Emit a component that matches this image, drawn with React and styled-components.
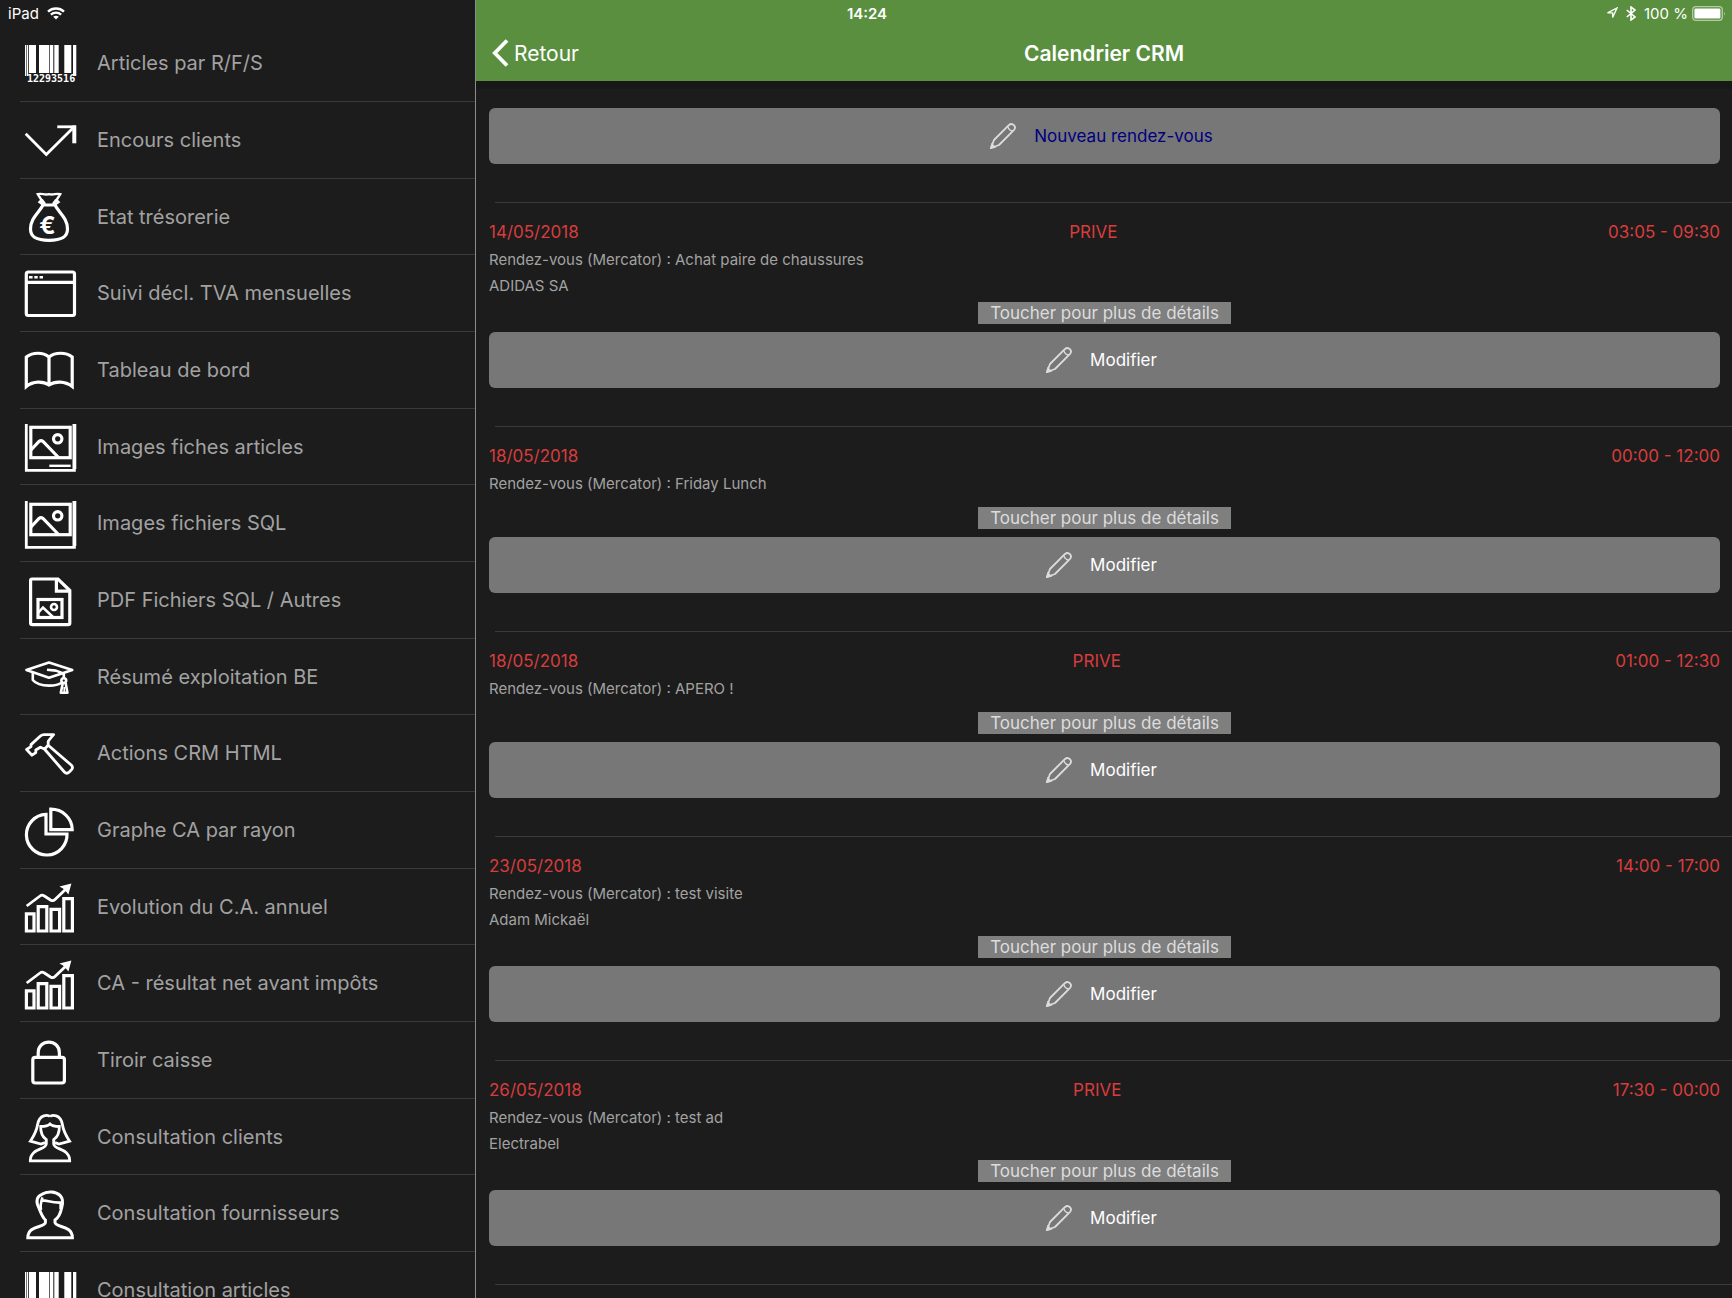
import styled, { createGlobalStyle } from 'styled-components';

const GlobalStyle = createGlobalStyle`
  * {
    box-sizing: border-box;
  }
  body {
    margin: 0;
    background-color: #1c1c1c;
    color: #a2a2a2;
    font-family: Inter, 'Liberation Sans', sans-serif;
  }
  button {
    font-family: inherit;
    border: none;
    cursor: pointer;
  }
`;

const Screen = styled.div`
  display: flex;
  height: 100vh;
  overflow: hidden;
`;

/* status bar, floats over both panes */
const StatusBar = styled.div`
  position: absolute;
  top: 0;
  left: 0;
  right: 0;
  display: grid;
  grid-template-columns: 1fr auto 1fr;
  align-items: center;
  height: 26px;
  padding: 0 6px 0 8px;
  color: white;
  font-size: 15px;
`;
const StatusGroup = styled.div`
  display: flex;
  align-items: center;
  justify-content: ${(props) => (props.$end ? 'flex-end' : 'flex-start')};
  gap: 8px;
`;
const Clock = styled.div`
  font-weight: 600;
`;
const Charge = styled.div`
  display: flex;
  align-items: center;
  gap: 4px;
`;

const Sidebar = styled.nav`
  flex: 0 0 476px;
  padding: 25px 0 0 20px;
  border-right: 1px solid #8c8c8c;
  overflow: hidden;
`;
const Menu = styled.ul`
  list-style: none;
  margin: 0;
  padding: 0;
`;
const MenuItem = styled.li`
  height: 77px;
  border-bottom: 1px solid #3a3a3a;
  &:nth-child(3n) {
    height: 76px;
  }
`;
const MenuLink = styled.a`
  display: flex;
  align-items: center;
  gap: 21px;
  height: 100%;
  padding-left: 5px;
  color: inherit;
  font-size: 20px;
  text-decoration: none;
`;
const MenuIcon = styled.svg`
  flex: none;
  width: 51px;
  height: 51px;
  overflow: visible;
  fill: none;
  stroke: white;
  stroke-width: 3.2;
`;

const Content = styled.main`
  flex: 1;
  min-width: 0;
  overflow: hidden;
`;
const Header = styled.header`
  display: grid;
  grid-template-columns: 1fr auto 1fr;
  align-items: center;
  height: 81px;
  padding: 25px 16px 0;
  background-color: #598f3f;
  color: white;
`;
const Back = styled.button`
  display: flex;
  align-items: center;
  justify-self: start;
  gap: 5px;
  padding: 0;
  background: none;
  color: white;
  font-size: 21px;
`;
const Title = styled.h1`
  margin: 0;
  font-size: 21px;
  font-weight: 600;
`;
const Toolbar = styled.div`
  padding: 19px 12px 38px 13px;
  border-top: 8px solid #181818;
`;
const ActionButton = styled.button`
  display: flex;
  align-items: center;
  justify-content: center;
  gap: 18px;
  width: 100%;
  height: 56px;
  padding: 0 6px 0 0;
  border-radius: 6px;
  background-color: #777777;
  color: ${(props) => (props.$primary ? '#00007f' : 'white')};
  font-size: 17px;
`;

const Entry = styled.article`
  padding: 0 12px 38px 13px;
  &::before {
    content: '';
    display: block;
    height: 1px;
    margin: 0 -12px 16px 6px;
    background-color: #3a3a3a;
  }
`;
const EntryHead = styled.div`
  display: flex;
  justify-content: space-between;
  height: 26px;
  margin-bottom: 2px;
  color: #d83c3c;
  font-size: 17px;
  line-height: 26px;
`;
const Notes = styled.div`
  min-height: 33px;
  margin-bottom: 3px;
  font-size: 15px;
  line-height: 26px;
`;
const Details = styled.button`
  display: block;
  height: 22px;
  margin: 0 auto 8px;
  padding: 0 12px;
  background-color: #7f7f7f;
  color: #dcdcdc;
  font-size: 17px;
  line-height: 22px;
`;

function Barcode() {
  return (
    <MenuIcon viewBox="0 0 51 51">
      <g fill="white" stroke="none">
        <path d="M0 7h1v31h-1zM1.6 7h1.6v31h-1.6zM4 7h7v28h-7zM14 7h10v28h-10zM24.7 7h3.6v28h-3.6zM29.3 7h4.4v28h-4.4zM39.3 7h7v28h-7zM48 7h3.3v31h-3.3z" />
        <text
          x="2"
          y="44"
          fontSize="10"
          fontWeight="700"
          fontFamily="'DejaVu Sans Mono', monospace"
        >
          12293516
        </text>
      </g>
    </MenuIcon>
  );
}

function Arrow() {
  return (
    <MenuIcon viewBox="0 0 51 51">
      <path d="M.7 18.8L21.3 39.5L49 12" strokeWidth="2.8" />
      <path d="M32.3 11.8H51" strokeWidth="2.8" />
      <path d="M49.3 10.5V28.3" strokeWidth="4" />
    </MenuIcon>
  );
}

function MoneyBag() {
  return (
    <MenuIcon viewBox="0 0 51 51">
      <path d="M18 14C14 22 5.5 27 5.5 38C5.5 46 11 49.3 24 49.3S42.5 46 42.5 38C42.5 27 34 22 30 14Z" />
      <path
        d="M18 13.5L14.5 11L16.5 9L12.8 3.2C17 1.8 19 4.5 24 3.2C29 4.5 31 1.8 35.2 3.2L31.5 9L33.5 11L30 13.5M17 9L20 13M31 9L28 13"
        strokeWidth="2.4"
      />
      <text
        x="22.5"
        y="43"
        fill="white"
        stroke="none"
        fontSize="24"
        fontWeight="700"
        textAnchor="middle"
      >
        €
      </text>
    </MenuIcon>
  );
}

function Browser() {
  return (
    <MenuIcon viewBox="0 0 51 51">
      <rect x="1.3" y="4" width="48.2" height="43.5" rx="2" />
      <path d="M1 14.3H49" />
      <path d="M4 9.2h3.6M9.3 9.2h3.4M14.6 9.2h3.4" strokeWidth="2.6" />
    </MenuIcon>
  );
}

function Book() {
  return (
    <MenuIcon viewBox="0 0 51 51">
      <path d="M1.3 41.5V12C8 7 18 7 24 12C30 7 41 7 47.2 12V41.5C40 36 30 36 24 40C18 36 8 36 1.3 41.5ZM24 12V41" />
    </MenuIcon>
  );
}

function Picture({ caption }) {
  return (
    <MenuIcon viewBox="0 0 51 51">
      <path d="M1.3 3V49.3H49.4V3" strokeWidth="2.8" />
      <path d="M49.4 3V48" strokeWidth="3.8" />
      <rect x="5.8" y="6.3" width="39.4" height="30.4" />
      <path d="M6 29L14 20.5Q16 18.8 18 20.5L34 37" />
      <circle cx="32.7" cy="17.8" r="4.2" />
      {caption && <path d="M24.3 44.8H45.7" strokeWidth="2.4" />}
    </MenuIcon>
  );
}

function PictureFile() {
  return (
    <MenuIcon viewBox="0 0 51 51">
      <path d="M7 4H33L44.8 15.5V48Q44.8 49.6 43 49.6H7.5Q5.6 49.6 5.6 48V5.5Q5.6 4 7 4Z" />
      <path d="M31.4 4V16.2H45" />
      <rect x="13" y="24.5" width="24" height="18" />
      <path d="M13 38L18 32.5L29 43" strokeWidth="2.6" />
      <circle cx="29" cy="32" r="3" strokeWidth="2.6" />
    </MenuIcon>
  );
}

function GradCap() {
  return (
    <MenuIcon viewBox="0 0 51 51">
      <g strokeWidth="2.6" strokeLinejoin="round">
        <path d="M1.4 19L24 11.6L47.2 19L24 26.8Z" />
        <path d="M7.8 21.5V29C11 33 17 34.6 24 34.6C30 34.6 34 33.6 37 31.5" />
        <path d="M22 18.8L31 19.6L38.8 22.8V28" />
        <circle cx="38.8" cy="29.6" r="2.4" />
        <path d="M37.8 32L35.8 41.8H42.4L40.6 32" />
        <path d="M39.2 36V41" strokeWidth="1.6" />
      </g>
    </MenuIcon>
  );
}

function Hammer() {
  return (
    <MenuIcon viewBox="0 0 51 51">
      <path
        d="M28.6 6.6H19Q17 6.6 15.4 8L6 16.6V18.6L1.6 21.5L7 27.2L10.8 24.6V22L15.4 19.2L19.4 21L39.4 44Q41.7 46.4 44.3 44L46.8 41.4Q48.4 39.2 46.2 37L23.2 17.2V13.4Q24.4 11.4 28.6 6.6ZM19.6 21L23.4 17"
        strokeWidth="2.8"
        strokeLinejoin="round"
      />
    </MenuIcon>
  );
}

function Pie() {
  return (
    <MenuIcon viewBox="0 0 51 51">
      <path d="M21 9.4A20.3 20.3 0 1 0 42 29H21Z" />
      <path d="M25.8 4.2V24.6H47.2C47.2 13 37.5 4.2 25.8 4.2Z" />
    </MenuIcon>
  );
}

function Growth() {
  return (
    <MenuIcon viewBox="0 0 51 51">
      <path d="M1.4 32.8H9V50H1.4ZM13.2 25.6H21.8V50H13.2ZM26 28.4H34.6V50H26ZM38.8 17.6H47.4V50H38.8Z" />
      <path
        d="M1.7 25L15 15Q17 13.4 19 14.8L25.5 19Q28 20.5 30 18.5L42 7"
        strokeWidth="2.8"
      />
      <path d="M46.4 2.4L34.4 5.4L38 7.6L41.4 11L43.4 13.4Z" fill="white" stroke="none" />
    </MenuIcon>
  );
}

function Lock() {
  return (
    <MenuIcon viewBox="0 0 51 51">
      <rect x="7.8" y="22.4" width="31.6" height="25.6" rx="2.4" />
      <path d="M13.2 22V18C13.2 3.4 34.4 3.4 34.4 18V22" />
    </MenuIcon>
  );
}

function Woman() {
  return (
    <MenuIcon viewBox="0 0 51 51">
      <path
        d="M25 5.6C23 3.6 14.5 3.2 12.6 13.5C11.6 20 9.5 24 5.4 30.2L16 33L20 31.6M25 5.6C27 3.6 35.5 3.2 37.4 13.5C38.4 20 40.5 24 44.6 30.2L34 33L30 31.6"
        strokeWidth="2.8"
      />
      <path
        d="M25 13C22.5 15.5 20 15.5 15.7 15.5C15.5 22 17.5 26 21.3 28.6V33C21 39 5.3 37 5.3 49.8H44.7C44.7 37 29 39 28.7 33V28.6C32.5 26 34.5 22 34.3 15.5C30 15.5 27.5 15.5 25 13Z"
        strokeWidth="2.8"
      />
    </MenuIcon>
  );
}

function Man() {
  return (
    <MenuIcon viewBox="0 0 51 51">
      <path
        d="M20.4 32C17 29 15.6 24 13.5 19C10.6 13 12 8 17 6.3C22 2.8 31 3.2 35 7.4C38.5 11 38 15.5 36.6 20C35.6 25 33.6 29.5 30 32V34.5C31 40 47.4 37 47.4 49.8H2.8C2.8 37 19.6 40 20.4 34.5Z"
        strokeWidth="3"
      />
      <path
        d="M16 22C15 18 16 14 17.4 9.4M16.6 12.4C22 12 26 15 35.6 14.6V21"
        strokeWidth="2.6"
      />
    </MenuIcon>
  );
}

function Pencil() {
  return (
    <svg width="26" height="26" viewBox="0 0 26 26" fill="none" stroke="#dcdcdc" strokeWidth="1.8">
      <path d="M1 25L4 17L18.8 2.2C22.5 -1 27 3.8 23.8 7.2L9 22Z" strokeLinejoin="round" />
      <path d="M17.8 3.3C18.5 6.2 20 7.6 22.8 8.2" strokeWidth="1.4" />
      <path d="M1 25L2 21.5L4.5 24Z" fill="#dcdcdc" />
    </svg>
  );
}

function Wifi() {
  return (
    <svg width="18" height="13" viewBox="0 0 18 13" fill="none" stroke="white" strokeWidth="2.4">
      <path d="M1 4.6C5.5 .4 12.5 .4 17 4.6M3.9 7.6C6.8 5 11.2 5 14.1 7.6" />
      <path d="M9 12.6L6.2 9.8C7.8 8.4 10.2 8.4 11.8 9.8Z" fill="white" stroke="none" />
    </svg>
  );
}

function Location() {
  return (
    <svg width="12" height="12" viewBox="0 0 12 12" fill="none" stroke="white" strokeWidth="1.3">
      <path d="M1.5 5.8L11 1L6.6 10.5V5.8Z" />
    </svg>
  );
}

function Bluetooth() {
  return (
    <svg width="10" height="15" viewBox="0 0 10 15" fill="none" stroke="white" strokeWidth="1.6">
      <path d="M.8 4L9 11L5 14V1L9 4L.8 11" />
    </svg>
  );
}

function Battery() {
  return (
    <svg width="34" height="15" viewBox="0 0 34 15" fill="none">
      <rect x=".7" y=".7" width="29.6" height="13.6" rx="3" stroke="#b4cda8" strokeWidth="1.3" />
      <rect x="2.4" y="2.4" width="26" height="10.2" rx="1.4" fill="white" />
      <path d="M32 5.2Q33.6 7.5 32 9.8Z" fill="#b4cda8" />
    </svg>
  );
}

const menu = [
  { label: 'Articles par R/F/S', icon: <Barcode /> },
  { label: 'Encours clients', icon: <Arrow /> },
  { label: 'Etat trésorerie', icon: <MoneyBag /> },
  { label: 'Suivi décl. TVA mensuelles', icon: <Browser /> },
  { label: 'Tableau de bord', icon: <Book /> },
  { label: 'Images fiches articles', icon: <Picture caption /> },
  { label: 'Images fichiers SQL', icon: <Picture /> },
  { label: 'PDF Fichiers SQL / Autres', icon: <PictureFile /> },
  { label: 'Résumé exploitation BE', icon: <GradCap /> },
  { label: 'Actions CRM HTML', icon: <Hammer /> },
  { label: 'Graphe CA par rayon', icon: <Pie /> },
  { label: 'Evolution du C.A. annuel', icon: <Growth /> },
  { label: 'CA - résultat net avant impôts', icon: <Growth /> },
  { label: 'Tiroir caisse', icon: <Lock /> },
  { label: 'Consultation clients', icon: <Woman /> },
  { label: 'Consultation fournisseurs', icon: <Man /> },
  { label: 'Consultation articles', icon: <Barcode /> },
];

const entries = [
  {
    date: '14/05/2018',
    flag: 'PRIVE',
    time: '03:05 - 09:30',
    notes: ['Rendez-vous (Mercator) : Achat paire de chaussures', 'ADIDAS SA'],
  },
  {
    date: '18/05/2018',
    time: '00:00 - 12:00',
    notes: ['Rendez-vous (Mercator) : Friday Lunch'],
  },
  {
    date: '18/05/2018',
    flag: 'PRIVE',
    time: '01:00 - 12:30',
    notes: ['Rendez-vous (Mercator) : APERO !'],
  },
  {
    date: '23/05/2018',
    time: '14:00 - 17:00',
    notes: ['Rendez-vous (Mercator) : test visite', 'Adam Mickaël'],
  },
  {
    date: '26/05/2018',
    flag: 'PRIVE',
    time: '17:30 - 00:00',
    notes: ['Rendez-vous (Mercator) : test ad', 'Electrabel'],
  },
];

function Appointment(props) {
  const { date, flag, time, notes } = props;
  return (
    <Entry>
      <EntryHead>
        <span>{date}</span>
        <span>{flag}</span>
        <span>{time}</span>
      </EntryHead>
      <Notes>
        {notes.map((note) => (
          <div key={note}>{note}</div>
        ))}
      </Notes>
      <Details type="button">Toucher pour plus de détails</Details>
      <ActionButton type="button">
        <Pencil />
        Modifier
      </ActionButton>
    </Entry>
  );
}

export default function App() {
  return (
    <Screen>
      <GlobalStyle />
      <Sidebar>
        <Menu>
          {menu.map((item) => (
            <MenuItem key={item.label}>
              <MenuLink href="#">
                {item.icon}
                {item.label}
              </MenuLink>
            </MenuItem>
          ))}
        </Menu>
      </Sidebar>
      <Content>
        <Header>
          <Back type="button">
            <svg width="17" height="28" viewBox="0 0 17 28" fill="none" stroke="white" strokeWidth="3.8">
              <path d="M15 1.5L2.8 14L15 26.5" />
            </svg>
            Retour
          </Back>
          <Title>Calendrier CRM</Title>
        </Header>
        <Toolbar>
          <ActionButton type="button" $primary>
            <Pencil />
            Nouveau rendez-vous
          </ActionButton>
        </Toolbar>
        {entries.map((entry) => (
          <Appointment key={entry.date + entry.time} {...entry} />
        ))}
        <Entry />
      </Content>
      <StatusBar>
        <StatusGroup>
          iPad
          <Wifi />
        </StatusGroup>
        <Clock>14:24</Clock>
        <StatusGroup $end>
          <Location />
          <Bluetooth />
          <Charge>
            100 %
            <Battery />
          </Charge>
        </StatusGroup>
      </StatusBar>
    </Screen>
  );
}
